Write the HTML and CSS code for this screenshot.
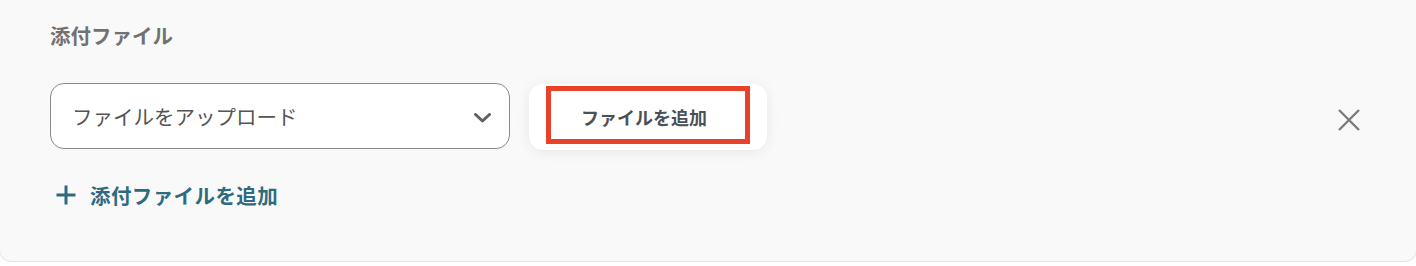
FILE: index.html
```html
<!DOCTYPE html>
<html lang="ja">
<head>
<meta charset="utf-8">
<title>添付ファイル</title>
<link rel="stylesheet" href="styles.css">
</head>
<body>
<div class="card">
  <div class="label">添付ファイル</div>
  <div class="row">
    <div class="select">
      <span class="select-text">ファイルをアップロード</span>
      <svg class="chevron" width="17" height="10" viewBox="0 0 17 10"><path d="M1.5 1.5 L8.5 8 L15.5 1.5" fill="none" stroke="currentColor" stroke-width="3" stroke-linecap="round" stroke-linejoin="round"/></svg>
    </div>
    <div class="upload-btn">
      <span class="upload-text">ファイルを追加</span>
      <span class="highlight"></span>
    </div>
    <button class="remove" aria-label="削除">
      <svg width="22" height="22" viewBox="0 0 22 22"><path d="M1 1 L21 21 M21 1 L1 21" fill="none" stroke="currentColor" stroke-width="2.3"/></svg>
    </button>
  </div>
  <button class="add-link">
    <svg class="plus" width="20" height="20" viewBox="0 0 20 20"><path d="M10 0.5 V19.5 M0.5 10 H19.5" fill="none" stroke="currentColor" stroke-width="3"/></svg>
    <span>添付ファイルを追加</span>
  </button>
</div>
</body>
</html>
```

FILE: styles.css
```css
* { box-sizing: border-box; }

html, body {
  margin: 0;
  padding: 0;
  background: #ffffff;
  overflow: hidden;
}

body {
  font-family: "Noto Sans CJK JP", "Noto Sans", sans-serif;
}

.card {
  width: 1418px;
  margin: -20px 0 0 -1px;
  padding: 39px 56px 51px 50px;
  background: #f9f9f9;
  border: 1px solid #e3e3e3;
  border-radius: 12px;
}

.label {
  font-size: 20.5px;
  line-height: 30px;
  font-weight: 700;
  color: #717171;
}

.row {
  display: flex;
  align-items: flex-start;
  margin-top: 33px;
}

.select {
  width: 460px;
  height: 66px;
  display: flex;
  align-items: center;
  justify-content: space-between;
  padding: 0 18px 0 21px;
  background: #ffffff;
  border: 1px solid #8a8a8a;
  border-radius: 14px;
}

.select-text {
  font-size: 20.5px;
  line-height: 30px;
  color: #555555;
}

.chevron {
  color: #606060;
  margin-top: 3px;
}

.upload-btn {
  position: relative;
  width: 238px;
  height: 66px;
  margin: 1px 0 0 19px;
  display: flex;
  align-items: center;
  justify-content: center;
  padding-right: 8px;
  background: #ffffff;
  border-radius: 14px;
  box-shadow: 0 2px 14px rgba(0, 0, 0, 0.07);
}

.upload-text {
  font-size: 18px;
  line-height: 26px;
  font-weight: 700;
  color: #4d5156;
}

.highlight {
  position: absolute;
  left: 17px;
  top: 2px;
  width: 204px;
  height: 58px;
  border: 5px solid #e8432a;
}

.remove {
  margin: 26px 0 0 auto;
  padding: 0;
  width: 22px;
  height: 22px;
  border: 0;
  background: none;
  color: #7a7a7a;
  display: flex;
}

.add-link {
  display: flex;
  align-items: center;
  margin-top: 30px;
  padding: 0 0 0 6px;
  border: 0;
  background: none;
  font-family: inherit;
  font-size: 20.5px;
  line-height: 30px;
  font-weight: 700;
  letter-spacing: 0.4px;
  color: #2e6a80;
}

.plus {
  margin-right: 14px;
}
```
